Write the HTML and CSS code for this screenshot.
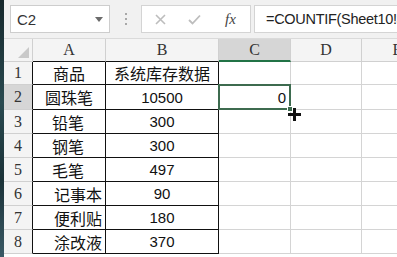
FILE: index.html
```html
<!DOCTYPE html>
<html lang="zh">
<head>
    <meta charset="UTF-8">
    <title>COUNTIF</title>
    <link rel="stylesheet" href="styles.css">
</head>
<body>
    <div class="strip"></div>
    <div class="app">
        <!-- 编辑栏 -->
        <div class="toolbar">
            <div class="name-box">
                <span>C2</span>
                <span class="arrow"></span>
            </div>
            <div class="dots"><i></i><i></i><i></i></div>
            <div class="fx-box">
                <svg class="cancel" width="11" height="11" viewBox="0 0 11 11">
                    <path d="M1 1L10 10M10 1L1 10" stroke="#bdbdbd" stroke-width="1.6" fill="none"/>
                </svg>
                <svg class="enter" width="13" height="11" viewBox="0 0 13 11">
                    <path d="M1 6L4.5 9.5L12 1.5" stroke="#bdbdbd" stroke-width="1.8" fill="none"/>
                </svg>
                <span class="fx">fx</span>
            </div>
            <div class="formula">=COUNTIF(Sheet10!$B$2:$B$8,A2)</div>
        </div>

        <!-- 表格 -->
        <div class="sheet">
            <div class="hd corner"><span class="tri"></span></div>
            <div class="hd col tb">A</div>
            <div class="hd col tb">B</div>
            <div class="hd col sel-col">C</div>
            <div class="hd col">D</div>
            <div class="hd col">E</div>

            <div class="hd row tr">1</div>
            <div class="c t center">商品</div>
            <div class="c t center">系统库存数据</div>
            <div class="c"></div><div class="c"></div><div class="c"></div>

            <div class="hd row tr sel-row">2</div>
            <div class="c t center">圆珠笔</div>
            <div class="c t num">10500</div>
            <div class="c active"><span>0</span><i class="handle"></i><span class="cross"></span></div>
            <div class="c"></div><div class="c"></div>

            <div class="hd row tr">3</div>
            <div class="c t pad1">铅笔</div>
            <div class="c t num">300</div>
            <div class="c"></div><div class="c"></div><div class="c"></div>

            <div class="hd row tr">4</div>
            <div class="c t pad1">钢笔</div>
            <div class="c t num">300</div>
            <div class="c"></div><div class="c"></div><div class="c"></div>

            <div class="hd row tr">5</div>
            <div class="c t pad1">毛笔</div>
            <div class="c t num">497</div>
            <div class="c"></div><div class="c"></div><div class="c"></div>

            <div class="hd row tr">6</div>
            <div class="c t pad2">记事本</div>
            <div class="c t num">90</div>
            <div class="c"></div><div class="c"></div><div class="c"></div>

            <div class="hd row tr">7</div>
            <div class="c t pad2">便利贴</div>
            <div class="c t num">180</div>
            <div class="c"></div><div class="c"></div><div class="c"></div>

            <div class="hd row tr">8</div>
            <div class="c t pad2">涂改液</div>
            <div class="c t num">370</div>
            <div class="c"></div><div class="c"></div><div class="c"></div>
        </div>
    </div>
</body>
</html>
```

FILE: styles.css
```css
* {
    box-sizing: border-box;
}
body {
    margin: 0;
    width: 397px;
    height: 257px;
    overflow: hidden;
    display: flex;
    background: #fff;
    font-family: "Liberation Sans", "Noto Sans CJK SC", sans-serif;
    color: #111;
}
.strip {
    width: 4px;
    flex: none;
    background: linear-gradient(#16282c, #2a4a50 40%, #1b3238 70%, #3b5a66);
}
.app {
    flex: 1;
    display: flex;
    flex-direction: column;
    min-width: 0;
    overflow: hidden;
}

/* toolbar */
.toolbar {
    height: 39px;
    flex: none;
    background: #f1f1f1;
    display: flex;
    align-items: center;
    padding-left: 6px;
    border-bottom: 1px solid #dadada;
}
.name-box {
    width: 100px;
    height: 28px;
    background: #fff;
    border: 1px solid #cdcdcd;
    display: flex;
    align-items: center;
    justify-content: space-between;
    padding: 0 6px 0 6px;
    font-size: 15px;
    color: #333;
}
.arrow {
    width: 0;
    height: 0;
    border-left: 4px solid transparent;
    border-right: 4px solid transparent;
    border-top: 5px solid #6b6b6b;
}
.dots {
    width: 31px;
    display: flex;
    flex-direction: column;
    align-items: center;
    gap: 3px;
}
.dots i {
    width: 2px;
    height: 2px;
    background: #a8a8a8;
}
.fx-box {
    width: 110px;
    height: 28px;
    background: #fff;
    border: 1px solid #d4d4d4;
    display: flex;
    align-items: center;
    font-size: 15px;
}
.cancel {
    margin-left: 13px;
}
.enter {
    margin-left: 22px;
}
.fx {
    margin-left: 24px;
    font-family: "Liberation Serif", serif;
    font-style: italic;
    font-size: 15px;
    color: #444;
}
.formula {
    flex: 1;
    height: 28px;
    margin-left: 3px;
    background: #fff;
    border: 1px solid #d4d4d4;
    border-right: none;
    padding-left: 11px;
    font-size: 14.5px;
    line-height: 26px;
    letter-spacing: -0.3px;
    color: #222;
    white-space: nowrap;
    overflow: hidden;
}

/* sheet */
.sheet {
    display: grid;
    grid-template-columns: 29px 73px 113px 72px 71px 72px;
    grid-template-rows: 23px 23px 25px 24px 24px 24px 24px 24px 24px;
    font-size: 16px;
}
.hd {
    background: #f4f4f4;
    border-right: 1px solid #d0d0d0;
    border-bottom: 1px solid #d0d0d0;
    font-family: "Liberation Serif", serif;
    font-size: 16px;
    color: #333;
    display: flex;
    align-items: center;
    justify-content: center;
}
.corner {
    position: relative;
    background: #f4f4f4;
}
.tri {
    position: absolute;
    right: 3px;
    bottom: 3px;
    width: 0;
    height: 0;
    border-left: 11px solid transparent;
    border-bottom: 11px solid #c9c9c9;
}
.col.tb {
    border-bottom-color: #111;
}
.row.tr {
    border-right-color: #111;
}
.sel-col {
    background: #d6d6d6;
    border-bottom: 2px solid #217346;
}
.sel-row {
    background: #d6d6d6;
}
.c {
    border-right: 1px solid #d4d4d4;
    border-bottom: 1px solid #d4d4d4;
    display: flex;
    align-items: center;
    font-family: "Noto Sans CJK SC", sans-serif;
    white-space: nowrap;
}
.c.t {
    border-right-color: #111;
    border-bottom-color: #111;
}
.center {
    justify-content: center;
}
.pad1 {
    padding-left: 19px;
}
.pad2 {
    padding-left: 21px;
}
.num {
    justify-content: center;
    font-family: "Liberation Sans", sans-serif;
    font-size: 15px;
}
.active {
    position: relative;
    justify-content: flex-end;
    padding-right: 4px;
    font-family: "Liberation Sans", sans-serif;
    font-size: 15px;
}
.active::after {
    content: "";
    position: absolute;
    left: -1px;
    top: -1px;
    right: -1px;
    bottom: -1px;
    border: 2px solid #3d6b4f;
}
.handle {
    position: absolute;
    right: -3px;
    bottom: -3px;
    width: 6px;
    height: 6px;
    background: #3d6b4f;
    border: 1px solid #fff;
    z-index: 2;
}
.cross {
    position: absolute;
    right: -11px;
    bottom: -12px;
    width: 13px;
    height: 13px;
    z-index: 3;
}
.cross::before,
.cross::after {
    content: "";
    position: absolute;
    background: #111;
}
.cross::before {
    left: 5px;
    top: 0;
    width: 3px;
    height: 13px;
}
.cross::after {
    left: 0;
    top: 5px;
    width: 13px;
    height: 3px;
}
```
